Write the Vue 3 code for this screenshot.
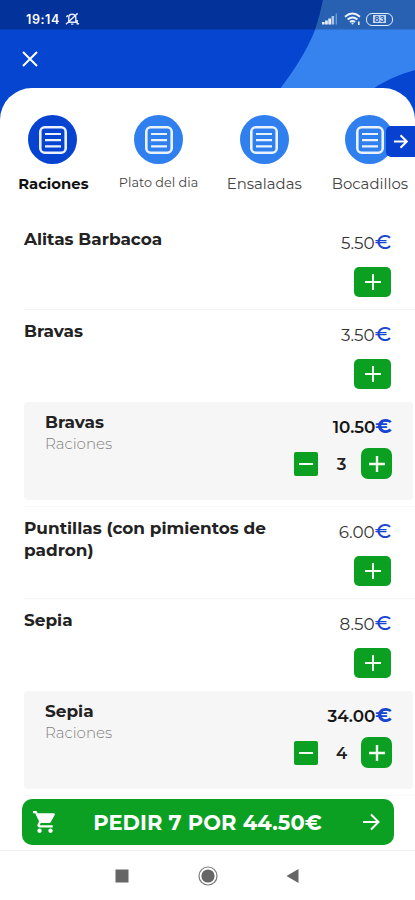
<template>
  <div class="screen">
    <header class="hero">
      <svg class="hero-bg" viewBox="0 0 415 126" width="415" height="126">
        <path d="M323 0 Q320 15 315 30 Q304 58 279 90 V126 H415 V0 Z" fill="#3683f0" />
        <path d="M368 92 Q389 77 415 70 V126 H360 Z" fill="#0545d0" />
        <rect width="415" height="29.500" fill="#000" opacity="0.260" />
      </svg>
      <div class="status">
        <span class="clock">19:14</span>
        <svg class="bell" viewBox="0 0 16 14" width="15" height="14" fill="none" stroke="#e4eaff" stroke-width="1.500">
          <path d="M3 10.500 H12.500 M4 10 V5.500 Q4 2 7.500 2 Q11.500 2 11.500 5.500 V10 M6.500 12.500 H9 M1 12.500 L13.500 1 M1.500 5 L3 3 M13 8 V12 H15" />
        </svg>
        <div class="status-right">
          <svg viewBox="0 0 16 12" width="16" height="12">
            <rect x="0" y="9" width="2.600" height="2.500" fill="#e6efff" />
            <rect x="3.100" y="7.500" width="2.700" height="4" fill="#e6efff" />
            <rect x="6.300" y="5.500" width="2.700" height="6" fill="#e6efff" />
            <rect x="9.500" y="3" width="2.600" height="8.500" fill="#a9c6ea" />
            <rect x="13.600" y="0.500" width="1.400" height="11" fill="#6d9bd4" />
          </svg>
          <svg class="wifi" viewBox="0 0 18 14" width="18" height="14" fill="none" stroke="#edf3ff" stroke-width="1.900">
            <path d="M1 4.800 Q8.500 -1.600 16 4.800 M3.600 7.500 Q8.500 3.300 13.400 7.500 M6 10 Q8.500 8 11 10" />
            <circle cx="8.500" cy="11.500" r="1" fill="#edf3ff" stroke="none" />
            <path d="M14.800 9.500 V13" stroke-width="1.600" />
          </svg>
          <span class="battery"><span class="level">83</span></span>
        </div>
      </div>
      <button class="close" aria-label="Cerrar">
        <svg viewBox="0 0 16 16" width="16" height="16" stroke="#fff" stroke-width="2" fill="none">
          <path d="M1 1 L15 15 M15 1 L1 15" />
        </svg>
      </button>
    </header>

    <main class="sheet">
      <nav class="categories">
        <div
          v-for="c in categories"
          :key="c.name"
          class="category"
          :class="{ active: c.name === selected, small: c.name.length > 10 }"
          @click="selected = c.name"
        >
          <div class="bubble">
            <svg viewBox="0 0 28 28" width="28" height="28" fill="none" stroke="#eaf2ff">
              <rect x="1.300" y="1.300" width="25.400" height="25.400" rx="4.500" stroke-width="2.600" />
              <path d="M6 8 H22 M6 14.200 H22 M6 20.400 H22" stroke-width="2.200" />
            </svg>
          </div>
          <span class="category-name">{{ c.name }}</span>
        </div>
        <button class="next" aria-label="Siguiente">
          <svg viewBox="0 0 16 16" width="15" height="15" fill="none" stroke="#fff" stroke-width="2.100">
            <path d="M1 8 H14.500 M8 1.300 L14.700 8 L8 14.700" />
          </svg>
        </button>
      </nav>

      <section v-for="item in items" :key="item.name" class="item">
        <div class="product" :class="{ plain: !item.qty }">
          <h2 class="title">{{ item.name }}</h2>
          <div class="side">
            <div class="price"><span class="amount">{{ item.price.toFixed(2) }}</span><span class="euro">€</span></div>
            <button class="add" @click="item.qty++">
              <svg viewBox="0 0 16 16" width="16" height="16" stroke="#f2fff2" stroke-width="2">
                <path d="M0 8 H16 M8 0 V16" />
              </svg>
            </button>
          </div>
        </div>
        <div v-if="item.qty" class="line-wrap">
          <div class="line">
            <div class="line-info">
              <h2 class="title">{{ item.name }}</h2>
              <p class="line-cat">Raciones</p>
            </div>
            <div class="side">
              <div class="price bold"><span class="amount">{{ (item.price * item.qty).toFixed(2) }}</span><span class="euro">€</span></div>
              <div class="stepper">
                <button class="minus" @click="item.qty--">
                  <svg viewBox="0 0 14 4" width="14" height="4" stroke="#f2fff2" stroke-width="2">
                    <path d="M0 2 H14" />
                  </svg>
                </button>
                <span class="qty">{{ item.qty }}</span>
                <button class="plus" @click="item.qty++">
                  <svg viewBox="0 0 16 16" width="16" height="16" stroke="#f2fff2" stroke-width="2.400">
                    <path d="M0 8 H16 M8 0 V16" />
                  </svg>
                </button>
              </div>
            </div>
          </div>
        </div>
      </section>
    </main>

    <footer class="footer">
      <button class="order">
        <svg class="cart" viewBox="1 2 21 20" width="23" height="22" fill="#fff">
          <path d="M7 18c-1.100 0-1.990.9-1.990 2S5.900 22 7 22s2-.9 2-2-.9-2-2-2zM1 2v2h2l3.600 7.590-1.350 2.450c-.16.28-.25.610-.25.960 0 1.100.9 2 2 2h12v-2H7.420c-.14 0-.25-.110-.25-.250l.03-.120.9-1.630h7.450c.75 0 1.410-.410 1.750-1.030l3.580-6.490A1 1 0 0 0 20 4H5.210l-.94-2H1zm16 16c-1.100 0-1.990.9-1.990 2s.89 2 1.990 2 2-.9 2-2-.9-2-2-2z" />
        </svg>
        <span class="order-text">PEDIR {{ count }} POR {{ total }}€</span>
        <svg class="go" viewBox="0 0 18 18" width="18" height="18" fill="none" stroke="#fff" stroke-width="2">
          <path d="M1 9 H16.500 M9 1.500 L16.500 9 L9 16.500" />
        </svg>
      </button>
    </footer>

    <div class="sysnav">
      <svg viewBox="0 0 14 14" width="14" height="14"><rect x="0.500" y="0.500" width="13" height="13" fill="#666" /></svg>
      <svg viewBox="0 0 20 20" width="20" height="20">
        <circle cx="10" cy="10" r="9" fill="none" stroke="#777" stroke-width="1.200" />
        <circle cx="10" cy="10" r="6.600" fill="#666" />
      </svg>
      <svg viewBox="0 0 14 14" width="14" height="14"><path d="M12.500 0 V14 L0.500 7 Z" fill="#666" /></svg>
    </div>
  </div>
</template>

<script setup>
import { ref, computed } from 'vue'

const selected = ref('Raciones')

const categories = [
  { name: 'Raciones' },
  { name: 'Plato del dia' },
  { name: 'Ensaladas' },
  { name: 'Bocadillos' }
]

const items = ref([
  { name: 'Alitas Barbacoa', price: 5.5, qty: 0 },
  { name: 'Bravas', price: 3.5, qty: 3 },
  { name: 'Puntillas (con pimientos de padron)', price: 6, qty: 0 },
  { name: 'Sepia', price: 8.5, qty: 4 }
])

const count = computed(() => items.value.reduce((sum, i) => sum + i.qty, 0))
const total = computed(() => items.value.reduce((sum, i) => sum + i.qty * i.price, 0).toFixed(2))
</script>

<style>
html, body { margin: 0; padding: 0; }
</style>

<style scoped>
* { box-sizing: border-box; }
button { border: 0; padding: 0; font: inherit; color: inherit; }
svg { display: block; flex: none; }
h2, p { margin: 0; }

.screen {
  width: 415px;
  height: 900px;
  overflow: hidden;
  display: flex;
  flex-direction: column;
  background: #fff;
  color: #222;
  font-family: Montserrat, Inter, sans-serif;
}

/* Header */
.hero {
  position: relative;
  flex: none;
  height: 126px;
  margin-bottom: -38px;
  background: #0545d0;
}
.hero-bg { position: absolute; top: 0; left: 0; }
.status {
  position: relative;
  height: 30px;
  padding: 8px 22px 0 26px;
  display: flex;
  align-items: center;
  color: #fff;
}
.clock { font: 600 12.5px/20px Inter, sans-serif; letter-spacing: 0.6px; width: 39px; padding-top: 1px; }
.status-right { margin-left: auto; display: flex; align-items: center; }
.wifi { margin: 0 4px 0 6px; }
.battery {
  width: 27px;
  height: 13px;
  border: 1.5px solid #e4eeff;
  border-radius: 6px;
  display: flex;
  align-items: center;
  justify-content: center;
}
.level {
  width: 13px;
  height: 8px;
  background: #c8daf3;
  color: #2b63b3;
  font: 700 8px/8px Inter, sans-serif;
  text-align: center;
}
.close { position: relative; display: block; background: none; margin: 21px 0 0 22px; }

/* White sheet */
.sheet {
  position: relative;
  flex: 1;
  min-height: 0;
  overflow: hidden;
  background: #fff;
  border-radius: 32px 32px 0 0;
}
.categories {
  position: relative;
  height: 130px;
  display: flex;
  padding-top: 27px;
  overflow: hidden;
}
.category {
  flex: none;
  width: 105.700px;
  display: flex;
  flex-direction: column;
  align-items: center;
}
.bubble {
  width: 49px;
  height: 49px;
  border-radius: 50%;
  background: #2f80ee;
  display: flex;
  align-items: center;
  justify-content: center;
}
.category-name {
  margin-top: 10px;
  font-size: 14.9px;
  line-height: 20px;
  white-space: nowrap;
  color: #444;
}
.active .bubble { background: #0643d0; }
.active .category-name { font-size: 14.8px; font-weight: 700; color: #111; padding-left: 1px; }
.small .category-name { font-size: 12.8px; margin-top: 9px; }
.next {
  position: absolute;
  top: 38px;
  right: 0;
  width: 29px;
  height: 31px;
  padding-right: 1px;
  background: #0840cf;
  border-radius: 5px 0 0 5px;
  display: flex;
  align-items: center;
  justify-content: center;
}

/* Products */
.product {
  height: 92px;
  margin-left: 24px;
  padding: 11px 24px 0 0;
  display: flex;
  justify-content: space-between;
}
.product.plain { border-bottom: 1px solid #f4f4f4; }
.title {
  font-size: 16.9px;
  line-height: 21.5px;
  font-weight: 700;
  width: 260px;
}
.side { display: flex; flex-direction: column; align-items: flex-end; }
.price { display: flex; align-items: baseline; line-height: 22px; margin-top: 2px; }
.amount { font-size: 16.8px; color: #333; }
.euro { font-size: 20.5px; font-weight: 500; color: #1745cf; }
.bold .amount { font-weight: 600; color: #151515; }
.bold .euro { font-weight: 700; }
.add {
  width: 37px;
  height: 30px;
  margin-top: 13px;
  border-radius: 5px;
  background: #0ba022;
  display: flex;
  align-items: center;
  justify-content: center;
}
.line-wrap { height: 105px; margin-left: 24px; border-bottom: 1px solid #f8f8f8; }
.line {
  height: 98px;
  margin-right: 2px;
  padding: 10px 21px 0 21px;
  display: flex;
  justify-content: space-between;
  background: #f6f6f6;
  border-radius: 4px;
}
.line .title { width: auto; }
.line-cat { font-size: 15px; line-height: 20px; color: #808080; font-weight: 300; }
.line .price { margin-top: 3px; }
.stepper { display: flex; align-items: center; margin-top: 10px; }
.minus, .plus { background: #0ba022; display: flex; align-items: center; justify-content: center; }
.minus { width: 24px; height: 24px; border-radius: 2px; }
.plus { width: 31px; height: 31px; border-radius: 7px; }
.qty { width: 43px; text-align: center; font-size: 16.5px; font-weight: 600; padding-left: 4px; }

/* Order bar */
.footer { flex: none; height: 51px; padding: 0 21px 0 22px; position: relative; }
.order {
  width: 372px;
  height: 46px;
  border-radius: 10px;
  background: #0ba022;
  color: #fff;
  display: flex;
  align-items: center;
  padding: 0 14px 0 11px;
}
.order-text { flex: 1; text-align: center; font-size: 21px; font-weight: 700; letter-spacing: 0.1px; padding-right: 3px; white-space: nowrap; }

.sysnav {
  flex: none;
  height: 50px;
  border-top: 1px solid #f1f1f1;
  display: flex;
  align-items: center;
  justify-content: space-between;
  padding: 0 115px;
}
</style>
